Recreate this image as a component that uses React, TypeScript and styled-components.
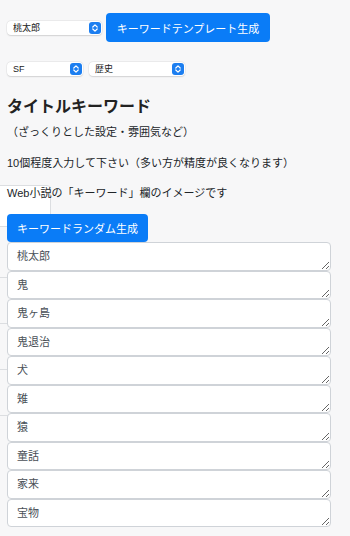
import React, { useState } from 'react';
import styled, { createGlobalStyle } from 'styled-components';

const FONT = `"Liberation Sans", "Noto Sans CJK JP", sans-serif`;

const KEYWORDS = ['桃太郎', '鬼', '鬼ヶ島', '鬼退治', '犬', '雉', '猿', '童話', '家来', '宝物'];

const GlobalStyle = createGlobalStyle`
  html, body {
    margin: 0;
    padding: 0;
    background: #f7f7f8;
    font-family: ${FONT};
    color: #212529;
  }
`;

const Chevron = () => (
  <svg width="12" height="12" viewBox="0 0 12 12">
    <rect x="0" y="0" width="12" height="12" rx="3" fill="#1c7ef0" />
    <path d="M3.8 5 L6 2.9 L8.2 5" stroke="#fff" strokeWidth="1.2" fill="none" strokeLinecap="round" strokeLinejoin="round" />
    <path d="M3.8 7 L6 9.1 L8.2 7" stroke="#fff" strokeWidth="1.2" fill="none" strokeLinecap="round" strokeLinejoin="round" />
  </svg>
);

const SelectBox = ({ width, options }: { width: number; options: string[] }) => {
  const [value, setValue] = useState(options[0]);
  return (
    <SelectWrap style={{ width }}>
      <Select value={value} onChange={(e) => setValue(e.target.value)}>
        {options.map((o) => (
          <option key={o}>{o}</option>
        ))}
      </Select>
      <SelectIcon>
        <Chevron />
      </SelectIcon>
    </SelectWrap>
  );
};

const App = () => {
  return (
    <Page>
      <GlobalStyle />
      <GhostBox />
      <GhostLines>
        <span />
        <span />
        <span />
        <span />
      </GhostLines>
      <Row top={13}>
        <SelectBox width={95} options={['桃太郎', '浦島太郎', 'かぐや姫']} />
        <Button wide>キーワードテンプレート生成</Button>
      </Row>
      <Row top={20} gap={6}>
        <SelectBox width={76} options={['SF', 'ファンタジー', '恋愛']} />
        <SelectBox width={96} options={['歴史', '現代', '未来']} />
      </Row>
      <Heading>タイトルキーワード</Heading>
      <Text top={6}>（ざっくりとした設定・雰囲気など）</Text>
      <Text top={15}>10個程度入力して下さい（多い方が精度が良くなります）</Text>
      <Text top={14}>Web小説の「キーワード」欄のイメージです</Text>
      <RandomButton>キーワードランダム生成</RandomButton>
      <List>
        {KEYWORDS.map((k) => (
          <KeywordArea key={k} defaultValue={k} rows={1} />
        ))}
      </List>
    </Page>
  );
};

export default App;

const Page = styled.div`
  position: relative;
  padding: 0 19px 9px 7px;
  min-height: 536px;
  box-sizing: border-box;
`;

const GhostBox = styled.div`
  position: absolute;
  left: -8px;
  top: 172px;
  width: 57px;
  height: 40px;
  background: #fff;
  border: 1px solid #dcdee1;
  border-radius: 4px;
`;

const GhostLines = styled.div`
  position: absolute;
  left: 0;
  top: 264px;
  width: 8px;
  display: flex;
  flex-direction: column;
  gap: 45px;

  span {
    display: block;
    height: 1px;
    background: #dcdee1;
  }
`;

const Row = styled.div<{ top: number; gap?: number }>`
  position: relative;
  display: flex;
  align-items: center;
  gap: ${({ gap }) => gap ?? 4}px;
  margin-top: ${({ top }) => top}px;
`;

const SelectWrap = styled.div`
  position: relative;
  height: 14px;
  background: #fff;
  border-radius: 4px;
  box-shadow: 0 0 0 0.5px rgba(0, 0, 0, 0.06), 0 0.5px 1.5px rgba(0, 0, 0, 0.12);
`;

const Select = styled.select`
  appearance: none;
  -webkit-appearance: none;
  display: block;
  box-sizing: border-box;
  width: 100%;
  height: 14px;
  margin: 0;
  border: none;
  background: transparent;
  padding: 0 16px 0 6px;
  font-family: ${FONT};
  font-size: 9px;
  color: #222;
  outline: none;
  line-height: 14px;
`;

const SelectIcon = styled.span`
  position: absolute;
  right: 1px;
  top: 1px;
  width: 12px;
  height: 12px;
  pointer-events: none;
  display: flex;
`;

const Button = styled.button<{ wide?: boolean }>`
  height: 29px;
  padding: 0 10px;
  border: none;
  border-radius: 4px;
  background: #0a7cf7;
  color: #fff;
  font-family: ${FONT};
  font-size: 11px;
  letter-spacing: 0;
  cursor: pointer;
  width: ${({ wide }) => (wide ? '164px' : 'auto')};
`;

const RandomButton = styled(Button)`
  position: relative;
  display: block;
  height: 28px;
  width: 141px;
  margin-top: 13px;
`;

const Heading = styled.h2`
  position: relative;
  margin: 20px 0 0;
  font-size: 16px;
  line-height: 22px;
  font-weight: 700;
  color: #222;
`;

const Text = styled.p<{ top: number }>`
  position: relative;
  margin: ${({ top }) => top}px 0 0;
  font-size: 11px;
  line-height: 16px;
`;

const List = styled.div`
  position: relative;
  display: flex;
  flex-direction: column;
`;

const KeywordArea = styled.textarea`
  display: block;
  box-sizing: border-box;
  width: 324px;
  height: 28.5px;
  padding: 6px 9px;
  border: 1px solid #cfd3d8;
  border-radius: 4px;
  background: #fff;
  font-family: ${FONT};
  font-size: 11px;
  line-height: 15px;
  color: #495057;
  resize: vertical;
  overflow: hidden;
  outline: none;
`;
